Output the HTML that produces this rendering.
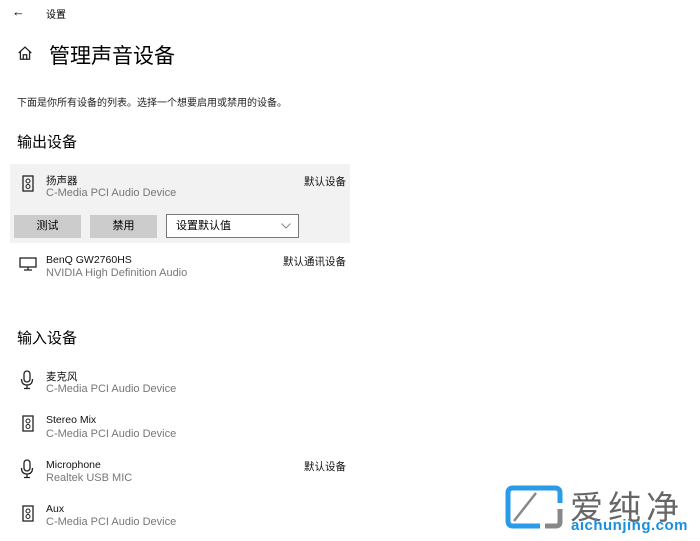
<!DOCTYPE html>
<html><head><meta charset="utf-8"><style>
body{margin:0;width:700px;height:541px;background:#fff;position:relative;overflow:hidden;font-family:"Liberation Sans","Noto Sans CJK SC",sans-serif;color:#000}
.a{position:absolute;white-space:nowrap}
.n{font-size:10.5px;color:#111}
.s{font-size:11px;color:#777}
.btn{position:absolute;top:215px;height:23px;width:67px;background:#ccc;font-size:11px;text-align:center;line-height:23px}
</style></head><body>
<div class="a" style="left:12px;top:4px;font-size:13px">←</div>
<div class="a" style="left:46px;top:6px;font-size:10px">设置</div>
<svg class="a" style="left:17px;top:45px" width="16" height="16" viewBox="0 0 14 14"><path d="M1.5 7 L7 1.8 L12.5 7 M3 5.8 V12.5 H11 V5.8 M5.5 12.5 V8.5 H8.5 V12.5" fill="none" stroke="#222" stroke-width="1.1"/></svg>
<div class="a" style="left:49px;top:40px;font-size:21px">管理声音设备</div>
<div class="a" style="left:17px;top:94px;font-size:10px;color:#222">下面是你所有设备的列表。选择一个想要启用或禁用的设备。</div>
<div class="a" style="left:17px;top:131px;font-size:15px">输出设备</div>
<div class="a" style="left:10px;top:164px;width:340px;height:79px;background:#f2f2f2"></div>
<svg class="a" style="left:22px;top:175px" width="12" height="17" viewBox="0 0 12 17"><rect x="1" y="1" width="10" height="15" fill="none" stroke="#222" stroke-width="1.3"/><circle cx="6" cy="6" r="2" fill="none" stroke="#222"/><circle cx="6" cy="11.5" r="2" fill="none" stroke="#222"/></svg>
<div class="a n" style="left:46px;top:173px">扬声器</div>
<div class="a s" style="left:46px;top:187px">C-Media PCI Audio Device</div>
<div class="a n" style="left:304px;top:174px">默认设备</div>
<div class="btn" style="left:14px">测试</div>
<div class="btn" style="left:90px">禁用</div>
<div class="a" style="left:166px;top:214px;width:131px;height:22px;border:1px solid #777;background:#fff;font-size:11px;line-height:22px;text-indent:9px">设置默认值<svg style="position:absolute;right:7px;top:8px" width="10" height="6" viewBox="0 0 10 6"><path d="M0.5 0.5 L5 5 L9.5 0.5" fill="none" stroke="#888"/></svg></div>
<svg class="a" style="left:19px;top:257px" width="18" height="14" viewBox="0 0 18 14"><rect x="1" y="1" width="16" height="9" fill="none" stroke="#222" stroke-width="1.3"/><path d="M9 10 V13 M5 13 H13" stroke="#222" stroke-width="1.3"/></svg>
<div class="a n" style="left:46px;top:254px">BenQ GW2760HS</div>
<div class="a s" style="left:46px;top:267px">NVIDIA High Definition Audio</div>
<div class="a n" style="left:283px;top:254px">默认通讯设备</div>
<div class="a" style="left:17px;top:327px;font-size:15px">输入设备</div>
<svg class="a" style="left:20px;top:370px" width="14" height="20" viewBox="0 0 14 20"><rect x="4" y="1" width="6" height="11" rx="3" fill="none" stroke="#222" stroke-width="1.3"/><path d="M1.5 9 Q1.5 15 7 15 Q12.5 15 12.5 9 M7 15 V18 M4 18.5 H10" fill="none" stroke="#222" stroke-width="1.3"/></svg>
<div class="a n" style="left:46px;top:369px">麦克风</div>
<div class="a s" style="left:46px;top:383px">C-Media PCI Audio Device</div>
<svg class="a" style="left:22px;top:415px" width="12" height="17" viewBox="0 0 12 17"><rect x="1" y="1" width="10" height="15" fill="none" stroke="#222" stroke-width="1.3"/><circle cx="6" cy="6" r="2" fill="none" stroke="#222"/><circle cx="6" cy="11.5" r="2" fill="none" stroke="#222"/></svg>
<div class="a n" style="left:46px;top:414px">Stereo Mix</div>
<div class="a s" style="left:46px;top:428px">C-Media PCI Audio Device</div>
<svg class="a" style="left:20px;top:459px" width="14" height="20" viewBox="0 0 14 20"><rect x="4" y="1" width="6" height="11" rx="3" fill="none" stroke="#222" stroke-width="1.3"/><path d="M1.5 9 Q1.5 15 7 15 Q12.5 15 12.5 9 M7 15 V18 M4 18.5 H10" fill="none" stroke="#222" stroke-width="1.3"/></svg>
<div class="a n" style="left:46px;top:459px">Microphone</div>
<div class="a s" style="left:46px;top:472px">Realtek USB MIC</div>
<div class="a n" style="left:304px;top:459px">默认设备</div>
<svg class="a" style="left:22px;top:505px" width="12" height="17" viewBox="0 0 12 17"><rect x="1" y="1" width="10" height="15" fill="none" stroke="#222" stroke-width="1.3"/><circle cx="6" cy="6" r="2" fill="none" stroke="#222"/><circle cx="6" cy="11.5" r="2" fill="none" stroke="#222"/></svg>
<div class="a n" style="left:46px;top:503px">Aux</div>
<div class="a s" style="left:46px;top:516px">C-Media PCI Audio Device</div>
<svg class="a" style="left:505px;top:485px" width="60" height="45" viewBox="0 0 60 45"><path d="M35 41 H8 Q3 41 3 36 V8 Q3 3 8 3 H50 Q55 3 55 8 V18" fill="none" stroke="#2a9be8" stroke-width="5"/><path d="M9 36 L31 8" stroke="#888" stroke-width="2.5"/><path d="M40 41 H51 Q55 41 55 37 V24" fill="none" stroke="#888" stroke-width="5"/></svg>
<div class="a" style="left:570px;top:481px;font-size:33px;color:#666;letter-spacing:5px">爱纯净</div>
<div class="a" style="left:571px;top:517px;font-size:15px;font-weight:bold;color:#1a8fe0;letter-spacing:0.5px">aichunjing.com</div>
</body></html>
